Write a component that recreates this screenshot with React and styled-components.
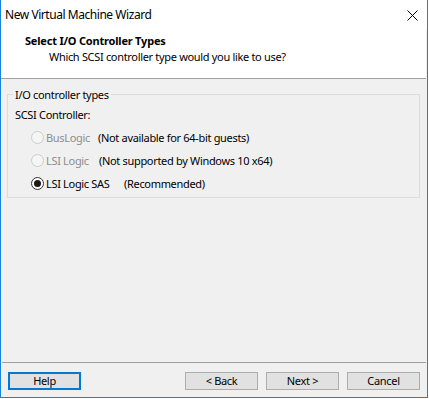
import React from "react";
import styled, { createGlobalStyle } from "styled-components";

const Global = createGlobalStyle`
  html, body { margin: 0; padding: 0; background: #ffffff; }
  body { font-family: "Noto Sans", "Open Sans", sans-serif; font-size: 11px; letter-spacing: -0.32px; color: #000; }
  * { box-sizing: border-box; }
`;

const Window = styled.div`
  width: 428px;
  height: 398px;
  border: 1px solid #1883d7;
  border-top: none;
  display: flex;
  flex-direction: column;
  background: #f0f0f0;
`;

const TitleBar = styled.div`
  height: 30px;
  display: flex;
  align-items: center;
  justify-content: space-between;
  padding-left: 4px;
  padding-right: 9px;
  background: #fff;
  font-size: 12px;
  letter-spacing: -0.45px;
  line-height: 16px;
`;

const Header = styled.div`
  height: 49px;
  background: #fff;
  border-bottom: 1px solid #a0a0a0;
  margin-right: 1px;
  padding-top: 3px;
  display: flex;
  flex-direction: column;
`;

const HeaderTitle = styled.div`
  font-weight: 700;
  padding-left: 24px;
  letter-spacing: -0.2px;
  line-height: 16px;
`;

const HeaderSub = styled.div`
  padding-left: 48px;
  line-height: 15px;
`;

const Body = styled.div`
  flex: 1;
  display: flex;
  flex-direction: column;
`;

const Group = styled.fieldset`
  margin: 8px 7px 0 6px;
  padding: 0 0 6px 0;
  border: 1px solid #dcdcdc;
  min-width: 0;
`;

const Legend = styled.legend`
  margin-left: 5px;
  padding: 0 2px;
  line-height: 15px;
`;

const Label = styled.div`
  padding-left: 7px;
  line-height: 16px;
  margin-top: 5px;
`;

const RadioList = styled.div`
  display: flex;
  flex-direction: column;
  gap: 7px;
  padding-left: 23px;
  margin-top: 6px;
`;

const RadioRow = styled.label`
  display: flex;
  align-items: center;
  height: 16px;
`;

const Circle = styled.span`
  width: 13px;
  height: 13px;
  border-radius: 50%;
  border: 1px solid ${(p) => (p.$disabled ? "#cccccc" : "#333333")};
  background: ${(p) => (p.$disabled ? "#f5f5f5" : "#ffffff")};
  display: flex;
  align-items: center;
  justify-content: center;
  flex-shrink: 0;
  margin-right: 2px;
`;

const Dot = styled.span`
  width: 7px;
  height: 7px;
  border-radius: 50%;
  background: #1a1a1a;
`;

const OptionName = styled.span`
  color: ${(p) => (p.$disabled ? "#8d8d8d" : "#000")};
  width: ${(p) => p.$w}px;
  flex-shrink: 0;
`;

const OptionNote = styled.span`
  color: #000;
`;

const Spacer = styled.div`
  flex: 1;
`;

const Separator = styled.div`
  border-top: 1px solid #a0a0a0;
  margin: 0 1px;
`;

const Footer = styled.div`
  display: flex;
  align-items: center;
  padding: 9px 7px 7px 7px;
`;

const Button = styled.button`
  width: 73px;
  height: 18px;
  font-family: inherit;
  font-size: 11px;
  letter-spacing: -0.32px;
  line-height: 14px;
  padding: 0;
  background: #e1e1e1;
  border: ${(p) => (p.$focused ? "2px solid #0078d7" : "1px solid #adadad")};
  color: #000;
  margin-left: ${(p) => p.$ml || 0}px;
`;

const Grow = styled.div`
  flex: 1;
`;

const options = [
  { name: "BusLogic", note: "(Not available for 64-bit guests)", disabled: true, w: 52 },
  { name: "LSI Logic", note: "(Not supported by Windows 10 x64)", disabled: true, w: 53 },
  { name: "LSI Logic SAS", note: "(Recommended)", disabled: false, checked: true, w: 78 },
];

export default function App() {
  return (
    <>
      <Global />
      <Window>
        <TitleBar>
          <span>New Virtual Machine Wizard</span>
          <svg width="11" height="11" viewBox="0 0 11 11">
            <path d="M0.5 0.5 L10.5 10.5 M10.5 0.5 L0.5 10.5" stroke="#000" strokeWidth="1" />
          </svg>
        </TitleBar>
        <Header>
          <HeaderTitle>Select I/O Controller Types</HeaderTitle>
          <HeaderSub>Which SCSI controller type would you like to use?</HeaderSub>
        </Header>
        <Body>
          <Group>
            <Legend>I/O controller types</Legend>
            <Label>SCSI Controller:</Label>
            <RadioList>
              {options.map((o) => (
                <RadioRow key={o.name}>
                  <Circle $disabled={o.disabled}>{o.checked && <Dot />}</Circle>
                  <OptionName $disabled={o.disabled} $w={o.w}>{o.name}</OptionName>
                  <OptionNote>{o.note}</OptionNote>
                </RadioRow>
              ))}
            </RadioList>
          </Group>
          <Spacer />
          <Separator />
          <Footer>
            <Button $focused>Help</Button>
            <Grow />
            <Button>&lt; Back</Button>
            <Button $ml={8}>Next &gt;</Button>
            <Button $ml={8}>Cancel</Button>
          </Footer>
        </Body>
      </Window>
    </>
  );
}
